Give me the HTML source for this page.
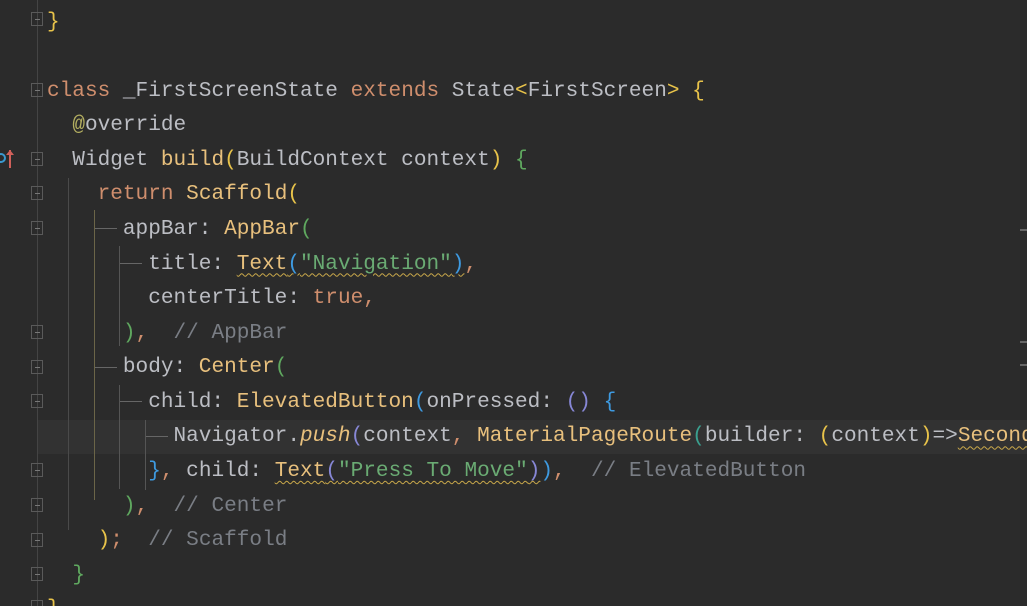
<!DOCTYPE html>
<html style="overflow:hidden;width:1027px;height:606px"><head><meta charset="utf-8"><style>
html,body{margin:0;padding:0;}
body{width:1027px;height:606px;background:#2b2b2b;overflow:hidden;position:relative;font-family:"Liberation Mono",monospace;}
.wrap{position:absolute;left:0;top:0;width:1027px;height:606px;overflow:hidden;}
.l{position:absolute;left:47px;height:34.57px;line-height:34.57px;font-size:21.08px;white-space:pre;color:#bcbec4;}
.k{color:#cf8e6d}.y{color:#e8c07d}.g{color:#6aab73}.c{color:#7a7e85}.a{color:#b3ae60}
.by{color:#e8c34a}.bg{color:#5fa85f}.bb{color:#3e9ae0}.bp{color:#8787d6}.bt{color:#3aa08f}
.i{font-style:italic;color:#e8c07d}
.w{text-decoration:underline wavy #c9a84a;text-decoration-thickness:1px;text-underline-offset:4px}
.v{position:absolute;width:1px;}
.h{position:absolute;height:1px;}
.fold{position:absolute;left:31px;width:12px;height:14px;border:1px solid #5a5a5a;box-sizing:border-box;}
.fold:after{content:"";position:absolute;left:3px;top:6px;width:5px;height:1px;background:#777;}
</style></head><body><div class="wrap">
<div style="position:absolute;left:38px;top:420px;width:989px;height:34px;background:#323232"></div>
<div class="v" style="left:37px;top:0;height:606px;background:#444"></div>
<div class="v" style="left:68px;top:178px;height:352px;background:#4a4a4a"></div>
<div class="v" style="left:94px;top:210px;height:290px;background:#6b6548"></div>
<div class="v" style="left:119px;top:246px;height:100px;background:#555"></div>
<div class="v" style="left:119px;top:385px;height:104px;background:#555"></div>
<div class="v" style="left:145px;top:420px;height:70px;background:#555"></div>
<div class="h" style="left:95px;top:228px;width:22px;background:#666"></div>
<div class="h" style="left:120px;top:263px;width:22px;background:#666"></div>
<div class="h" style="left:95px;top:367px;width:22px;background:#666"></div>
<div class="h" style="left:120px;top:401px;width:22px;background:#666"></div>
<div class="h" style="left:146px;top:436px;width:22px;background:#666"></div>
<div class="fold" style="top:12px"></div>
<div class="fold" style="top:83px"></div>
<div class="fold" style="top:152px"></div>
<div class="fold" style="top:186px"></div>
<div class="fold" style="top:221px"></div>
<div class="fold" style="top:325px"></div>
<div class="fold" style="top:360px"></div>
<div class="fold" style="top:394px"></div>
<div class="fold" style="top:463px"></div>
<div class="fold" style="top:498px"></div>
<div class="fold" style="top:533px"></div>
<div class="fold" style="top:567px"></div>
<div class="fold" style="top:600px"></div>
<div style="position:absolute;left:-4px;top:153px;width:10px;height:10px;border:2px solid #3a9ad0;border-radius:50%;box-sizing:border-box"></div>
<div style="position:absolute;left:9px;top:150px;width:2px;height:18px;background:#d0605a"></div>
<div style="position:absolute;left:6px;top:150px;width:0;height:0;border-left:4px solid transparent;border-right:4px solid transparent;border-bottom:5px solid #d0605a"></div>
<div style="position:absolute;left:1020px;top:229px;width:7px;height:2px;background:#666"></div>
<div style="position:absolute;left:1020px;top:341px;width:7px;height:2px;background:#666"></div>
<div style="position:absolute;left:1020px;top:364px;width:7px;height:2px;background:#666"></div>

<div class="l" style="top:4.5px"><span class="by">}</span></div>
<div class="l" style="top:73.6px"><span class="k">class</span> _FirstScreenState <span class="k">extends</span> State<span class="by">&lt;</span>FirstScreen<span class="by">&gt;</span> <span class="by">{</span></div>
<div class="l" style="top:108.2px">  <span class="a">@</span>override</div>
<div class="l" style="top:142.8px">  Widget <span class="y">build</span><span class="by">(</span>BuildContext context<span class="by">)</span> <span class="bg">{</span></div>
<div class="l" style="top:177.4px">    <span class="k">return</span> <span class="y">Scaffold</span><span class="by">(</span></div>
<div class="l" style="top:211.9px">      appBar: <span class="y">AppBar</span><span class="bg">(</span></div>
<div class="l" style="top:246.5px">        title: <span class="w"><span class="y">Text</span><span class="bb">(</span><span class="g">"Navigation"</span><span class="bb">)</span></span><span class="k">,</span></div>
<div class="l" style="top:281.1px">        centerTitle: <span class="k">true,</span></div>
<div class="l" style="top:315.6px">      <span class="bg">)</span><span class="k">,</span>  <span class="c">// AppBar</span></div>
<div class="l" style="top:350.2px">      body: <span class="y">Center</span><span class="bg">(</span></div>
<div class="l" style="top:384.8px">        child: <span class="y">ElevatedButton</span><span class="bb">(</span>onPressed: <span class="bp">()</span> <span class="bb">{</span></div>
<div class="l" style="top:419.4px">          Navigator.<span class="i">push</span><span class="bp">(</span>context<span class="k">,</span> <span class="y">MaterialPageRoute</span><span class="bt">(</span>builder: <span class="by">(</span>context<span class="by">)</span>=&gt;<span class="w y">Second</span></div>
<div class="l" style="top:453.9px">        <span class="bb">}</span><span class="k">,</span> child: <span class="w"><span class="y">Text</span><span class="bp">(</span><span class="g">"Press To Move"</span><span class="bp">)</span></span><span class="bb">)</span><span class="k">,</span>  <span class="c">// ElevatedButton</span></div>
<div class="l" style="top:488.5px">      <span class="bg">)</span><span class="k">,</span>  <span class="c">// Center</span></div>
<div class="l" style="top:523.1px">    <span class="by">)</span><span class="k">;</span>  <span class="c">// Scaffold</span></div>
<div class="l" style="top:557.7px">  <span class="bg">}</span></div>
<div class="l" style="top:592.2px;height:13.8px;overflow:hidden"><span class="by">}</span></div>
</div></body></html>
